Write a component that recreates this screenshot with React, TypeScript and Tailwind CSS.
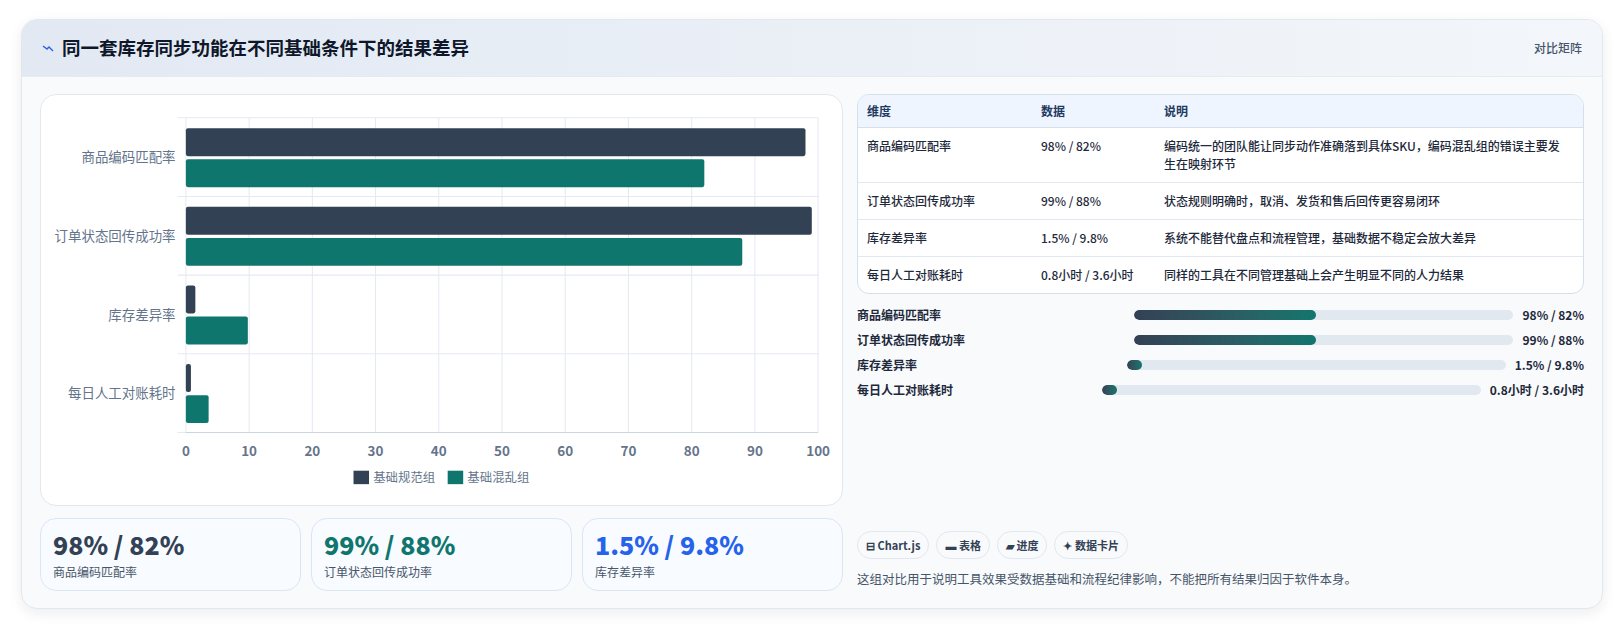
import React from "react";

const ROWS = [
  { name: "商品编码匹配率", a: 98, b: 82, data: "98% / 82%", note: "编码统一的团队能让同步动作准确落到具体SKU，编码混乱组的错误主要发生在映射环节", fill: 48 },
  { name: "订单状态回传成功率", a: 99, b: 88, data: "99% / 88%", note: "状态规则明确时，取消、发货和售后回传更容易闭环", fill: 48 },
  { name: "库存差异率", a: 1.5, b: 9.8, data: "1.5% / 9.8%", note: "系统不能替代盘点和流程管理，基础数据不稳定会放大差异", fill: 4 },
  { name: "每日人工对账耗时", a: 0.8, b: 3.6, data: "0.8小时 / 3.6小时", note: "同样的工具在不同管理基础上会产生明显不同的人力结果", fill: 4 },
];

const font = { fontFamily: '"Noto Sans CJK SC", "Noto Sans", sans-serif' };

function Chart() {
  const x0 = 140;
  const w = 611;
  const y0 = 22;
  const band = 76;
  const sx = (v: number) => (v / 100) * w;
  return (
    <svg width="803" height="412" viewBox="0 0 776 398" className="block">
      {Array.from({ length: 11 }).map((_, i) => (
        <g key={i}>
          <line x1={x0 + i * 61.1} x2={x0 + i * 61.1} y1={y0} y2={y0 + 304} stroke="#e5e9f0" />
          <text x={x0 + i * 61.1} y={349} textAnchor="middle" fontSize="13" fontWeight="600" fill="#64748b" style={font}>
            {i * 10}
          </text>
        </g>
      ))}
      {[0, 1, 2, 3, 4].map((i) => (
        <line key={i} x1={x0 - 8} x2={x0 + w} y1={y0 + i * band} y2={y0 + i * band} stroke="#e5e9f0" />
      ))}
      <line x1={x0} x2={x0 + w} y1={y0 + 304} y2={y0 + 304} stroke="#cbd5e1" />
      {ROWS.map((r, i) => {
        const c = y0 + band * i + band / 2;
        return (
          <g key={r.name}>
            <text x={x0 - 10} y={c + 5} textAnchor="end" fontSize="13" fill="#64748b" style={font}>
              {r.name}
            </text>
            <rect x={x0} y={c - 28} width={sx(r.a)} height={27} rx={2} fill="#334155" />
            <rect x={x0} y={c + 2} width={sx(r.b)} height={27} rx={2} fill="#0f766e" />
          </g>
        );
      })}
      <rect x={302} y={363} width={15} height={13} fill="#334155" />
      <text x={321} y={374} fontSize="12" fill="#64748b" style={font}>基础规范组</text>
      <rect x={393} y={363} width={15} height={13} fill="#0f766e" />
      <text x={412} y={374} fontSize="12" fill="#64748b" style={font}>基础混乱组</text>
    </svg>
  );
}

function Kpi({ value, label, color }: { value: string; label: string; color: string }) {
  return (
    <div className="flex-1 h-[73px] rounded-2xl border border-[#dbe6f3] bg-[#f8fbff] px-3 pt-[9px]">
      <div className={`text-[25px] font-extrabold leading-8 ${color}`}>{value}</div>
      <div className="text-[12px] text-[#475569] mt-[3px]">{label}</div>
    </div>
  );
}

export default function App() {
  return (
    <div className="w-[1615px] h-[628px] bg-white pt-[19px] pl-[21px]" style={font}>
      <div className="w-[1582px] h-[590px] flex flex-col rounded-2xl border border-[#e2e8f0] bg-[#f8fafc] shadow-[0_4px_14px_rgba(15,23,42,0.08)] overflow-hidden">
        <div className="h-[57px] shrink-0 flex items-center justify-between px-5 bg-gradient-to-r from-[#e2e9f3] to-[#f3f6fa] border-b border-[#e6ebf2]">
          <div className="flex items-center gap-2">
            <svg width="12" height="12" viewBox="0 0 12 12">
              <path d="M1 4l4 3 2-2 4 4" stroke="#2563eb" strokeWidth="1.4" fill="none" />
            </svg>
            <h1 className="text-[18.5px] font-bold text-[#0f172a]">同一套库存同步功能在不同基础条件下的结果差异</h1>
          </div>
          <span className="text-[12px] text-[#475569] font-medium">对比矩阵</span>
        </div>
        <div className="flex-1 flex gap-[14px] px-[18px] pt-[17px] pb-[18px]">
          <div className="w-[803px] flex flex-col gap-[12px]">
            <div className="h-[412px] rounded-2xl border border-[#e2e8f0] bg-white">
              <Chart />
            </div>
            <div className="flex gap-[10px]">
              <Kpi value="98% / 82%" label="商品编码匹配率" color="text-[#334155]" />
              <Kpi value="99% / 88%" label="订单状态回传成功率" color="text-[#0f766e]" />
              <Kpi value="1.5% / 9.8%" label="库存差异率" color="text-[#2563eb]" />
            </div>
          </div>
          <div className="flex-1 flex flex-col">
            <div className="rounded-xl border border-[#d5e0ec] bg-white overflow-hidden text-[12px] font-medium text-[#1e293b]">
              <div className="flex h-[33px] items-center bg-[#eef5ff] border-b border-[#d5e0ec] font-semibold text-[#1e3a5f]">
                <div className="w-[183px] pl-[9px]">维度</div>
                <div className="w-[123px]">数据</div>
                <div className="flex-1">说明</div>
              </div>
              {ROWS.map((r, i) => (
                <div key={r.name} className={`flex py-[9px] leading-[18px] ${i < 3 ? "border-b border-[#e2e8f0]" : ""}`}>
                  <div className="w-[183px] pl-[9px]">{r.name}</div>
                  <div className="w-[123px]">{r.data}</div>
                  <div className="flex-1 pr-3">{r.note}</div>
                </div>
              ))}
            </div>
            <div className="flex flex-col gap-[6px] mt-[11px]">
              {ROWS.map((r) => (
                <div key={r.name} className="flex items-center h-[19px] text-[12px] font-semibold text-[#1e293b]">
                  <div className="flex-1">{r.name}</div>
                  <div className="w-[379px] h-[10px] rounded-full bg-[#e2e8f0] overflow-hidden">
                    <div className="h-full rounded-full bg-gradient-to-r from-[#334155] to-[#0f766e]" style={{ width: `${r.fill}%` }} />
                  </div>
                  <div className="ml-[9px] text-right">{r.data}</div>
                </div>
              ))}
            </div>
            <div className="flex-1" />
            <div className="flex gap-[7px] text-[11px] font-semibold text-[#334155]">
              {["⊟ Chart.js", "▬ 表格", "▰ 进度", "✦ 数据卡片"].map((t) => (
                <span key={t} className="px-[8px] h-[28px] flex items-center rounded-full border border-[#e2e8f0] bg-[#f8fafc]">{t}</span>
              ))}
            </div>
            <p className="mt-[11px] mb-[2px] text-[12.5px] text-[#475569]">这组对比用于说明工具效果受数据基础和流程纪律影响，不能把所有结果归因于软件本身。</p>
          </div>
        </div>
      </div>
    </div>
  );
}
